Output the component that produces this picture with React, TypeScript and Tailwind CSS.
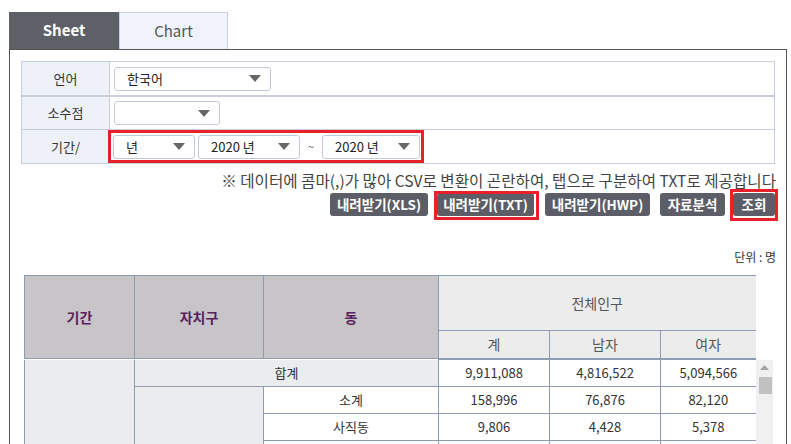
import React from "react";

const Arrow = () => (
  <svg width="12" height="7" viewBox="0 0 12 7" className="shrink-0">
    <path d="M0 0 H12 L6 7 Z" fill="#666" />
  </svg>
);

function Select({ w, text }: { w: string; text: string }) {
  return (
    <div
      className={`${w} h-[24px] flex items-center justify-between border border-[#c5c9d3] rounded-[3px] bg-white pl-[12px] pr-[9px] text-[13px] text-[#222]`}
    >
      <span>{text}</span>
      <Arrow />
    </div>
  );
}

const btn =
  "relative h-[23px] flex items-center justify-center rounded-[3px] bg-[#5b5e66] text-white font-bold text-[13.5px]";

export default function App() {
  const td = "border border-[#8e9cb1] text-center text-[13px] text-[#333] h-[27px] p-0";
  return (
    <div
      className="w-[791px] h-[444px] overflow-hidden bg-white"
      style={{ fontFamily: '"Noto Sans CJK KR", "Noto Sans", sans-serif' }}
    >
      {/* tabs */}
      <div className="flex pl-[9px] pt-[12px]">
        <div className="w-[110px] h-[37px] bg-[#5e6068] text-white text-[15px] font-semibold flex items-center justify-center">
          Sheet
        </div>
        <div className="w-[109px] h-[37px] bg-[#f0f3fb] border border-b-0 border-[#c8d0e0] text-[#555] text-[15px] flex items-center justify-center">
          Chart
        </div>
      </div>
      {/* main box */}
      <div className="ml-[9px] w-[778px] h-[400px] border border-b-0 border-[#555] pt-[11px] pl-[11px] pr-[11px]">
        {/* form */}
        <div className="w-[754px] border border-[#c8cedc] text-[13px] text-[#333]">
          <div className="flex h-[35px] border-b-2 border-[#c8cedc]">
            <div className="w-[88px] bg-[#eef1f8] border-r border-[#c8cedc] flex items-center justify-center">언어</div>
            <div className="flex items-center pl-[4px]">
              <Select w="w-[157px]" text="한국어" />
            </div>
          </div>
          <div className="flex h-[33px] border-b border-[#c8cedc]">
            <div className="w-[88px] bg-[#eef1f8] border-r border-[#c8cedc] flex items-center justify-center">소수점</div>
            <div className="flex items-center pl-[4px]">
              <Select w="w-[106px]" text="" />
            </div>
          </div>
          <div className="flex h-[33px]">
            <div className="w-[88px] bg-[#eef1f8] border-r border-[#c8cedc] flex items-center justify-center">기간/</div>
            <div className="flex items-center pl-[1px]">
              <div className="w-[310px] h-[27px] flex items-center pl-[2px] outline-[3px] outline-solid outline-[#e8202a]">
                <Select w="w-[82px]" text="년" />
                <div className="w-[3px]" />
                <Select w="w-[102px]" text="2020 년" />
                <span className="w-[22px] text-center text-[11px] text-[#666]">~</span>
                <Select w="w-[98px]" text="2020 년" />
              </div>
            </div>
          </div>
        </div>
        {/* notice */}
        <div className="w-[755px] text-right text-[15.6px] text-[#444] mt-[6px] h-[21px] leading-[21px] whitespace-nowrap">
          ※ 데이터에 콤마(,)가 많아 CSV로 변환이 곤란하여, 탭으로 구분하여 TXT로 제공합니다
        </div>
        <div className="flex justify-end w-[754px] mt-[2px]">
          <div className={`${btn} w-[98px]`}>내려받기(XLS)</div>
          <div className={`${btn} w-[97px] ml-[9px]`}>
            내려받기(TXT)
            <span className="absolute -left-[3px] -right-[5px] -top-[2px] -bottom-[4px] border-[3px] border-[#e8202a]" />
          </div>
          <div className={`${btn} w-[105px] ml-[11px]`}>내려받기(HWP)</div>
          <div className={`${btn} w-[65px] ml-[10px]`}>자료분석</div>
          <div className={`${btn} w-[42px] ml-[8px]`}>
            조회
            <span className="absolute -left-[3px] -right-[3px] -top-[4px] -bottom-[5px] border-[3px] border-[#e8202a]" />
          </div>
        </div>
        {/* unit */}
        <div className="w-[755px] text-right text-[12px] text-[#333] mt-[33px] h-[16px] leading-[16px]">단위 : 명</div>
        {/* table */}
        <div className="ml-[3px] mt-[10px]">
          <table className="border-collapse table-fixed w-[731px]">
            <colgroup>
              <col className="w-[110px]" />
              <col className="w-[129px]" />
              <col className="w-[175px]" />
              <col className="w-[111px]" />
              <col className="w-[111px]" />
              <col className="w-[95px]" />
            </colgroup>
            <tbody>
              <tr>
                <td rowSpan={2} className="border border-[#8e9cb1] bg-[#c7c5c7] text-[#5b1e5e] font-bold text-[14px] text-center">기간</td>
                <td rowSpan={2} className="border border-[#8e9cb1] bg-[#c7c5c7] text-[#5b1e5e] font-bold text-[14px] text-center">자치구</td>
                <td rowSpan={2} className="border border-[#8e9cb1] bg-[#c7c5c7] text-[#5b1e5e] font-bold text-[14px] text-center">동</td>
                <td colSpan={3} className="border border-[#8e9cb1] border-r-0 bg-[#ececec] text-[#555] text-[14px] text-center h-[55px]">전체인구</td>
              </tr>
              <tr>
                <td className="border border-[#8e9cb1] border-b-2 bg-[#ececec] text-[#555] text-[14px] text-center h-[28px]">계</td>
                <td className="border border-[#8e9cb1] border-b-2 bg-[#ececec] text-[#555] text-[14px] text-center">남자</td>
                <td className="border border-[#8e9cb1] border-b-2 border-r-0 bg-[#ececec] text-[#555] text-[14px] text-center">여자</td>
              </tr>
            </tbody>
          </table>
          <div className="flex">
            <table className="border-collapse table-fixed w-[731px]">
              <colgroup>
                <col className="w-[110px]" />
                <col className="w-[129px]" />
                <col className="w-[175px]" />
                <col className="w-[111px]" />
                <col className="w-[111px]" />
                <col className="w-[95px]" />
              </colgroup>
              <tbody>
                <tr>
                  <td rowSpan={5} className="border border-[#8e9cb1] border-t-0 bg-[#ebecee]"></td>
                  <td colSpan={2} className={`${td} border-t-0 bg-[#ebecee]`}>합계</td>
                  <td className={`${td} border-t-0`}>9,911,088</td>
                  <td className={`${td} border-t-0`}>4,816,522</td>
                  <td className={`${td} border-t-0 border-r-0`}>5,094,566</td>
                </tr>
                <tr>
                  <td rowSpan={4} className="border border-[#8e9cb1] bg-[#ebecee]"></td>
                  <td className={td}>소계</td>
                  <td className={td}>158,996</td>
                  <td className={td}>76,876</td>
                  <td className={`${td} border-r-0`}>82,120</td>
                </tr>
                <tr>
                  <td className={td}>사직동</td>
                  <td className={td}>9,806</td>
                  <td className={td}>4,428</td>
                  <td className={`${td} border-r-0`}>5,378</td>
                </tr>
                <tr>
                  <td className={td}></td>
                  <td className={td}></td>
                  <td className={td}></td>
                  <td className={`${td} border-r-0`}></td>
                </tr>
                <tr>
                  <td className={td}></td>
                  <td className={td}></td>
                  <td className={td}></td>
                  <td className={`${td} border-r-0`}></td>
                </tr>
              </tbody>
            </table>
            <div className="w-[17px] h-[120px] bg-[#f0f0f0] relative">
              <svg width="9" height="5" viewBox="0 0 9 5" className="absolute left-[4px] top-[5px]">
                <path d="M0 5 L4.5 0 L9 5 Z" fill="#a3a3a3" />
              </svg>
              <div className="absolute left-[3px] top-[17px] w-[13px] h-[17px] bg-[#c1c1c1]" />
            </div>
          </div>
        </div>
      </div>
    </div>
  );
}
